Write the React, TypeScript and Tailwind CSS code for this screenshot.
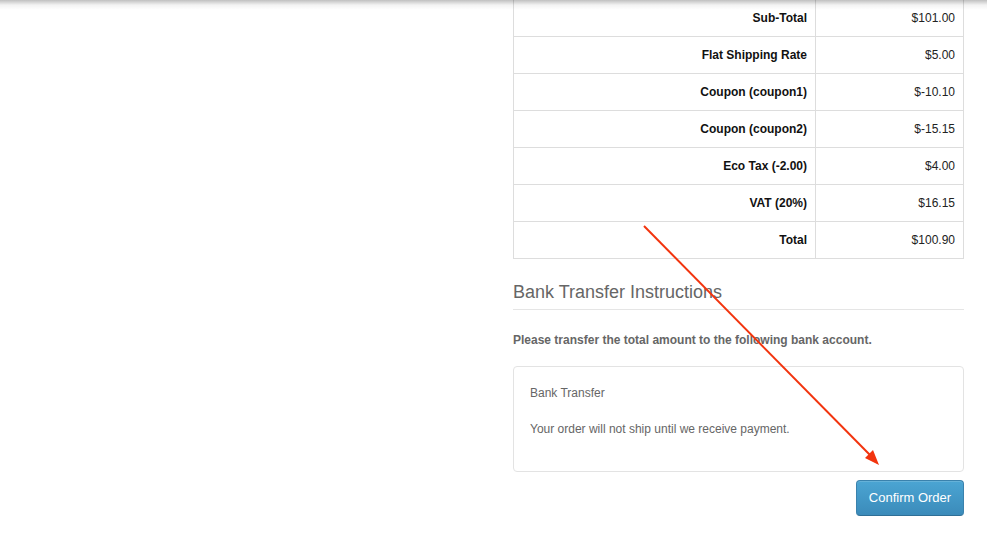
import React from 'react';

const totals = [
  { label: 'Sub-Total', value: '$101.00' },
  { label: 'Flat Shipping Rate', value: '$5.00' },
  { label: 'Coupon (coupon1)', value: '$-10.10' },
  { label: 'Coupon (coupon2)', value: '$-15.15' },
  { label: 'Eco Tax (-2.00)', value: '$4.00' },
  { label: 'VAT (20%)', value: '$16.15' },
  { label: 'Total', value: '$100.90' },
];

const App: React.FC = () => {
  return (
    <div
      className="relative min-h-[544px] w-full overflow-hidden bg-white text-[12px] text-[#666]"
      style={{ fontFamily: '"Liberation Sans", Arial, sans-serif' }}
    >
      {/* header shadow */}
      <div className="absolute inset-x-0 top-0 h-[10px] bg-gradient-to-b from-black/25 via-black/5 to-transparent" />

      <div className="ml-[513px] w-[451px] -mt-px">
        {/* Totals */}
        <table className="w-full border-collapse">
          <tbody>
            {totals.map((row) => (
              <tr key={row.label} className="h-[37px]">
                <td className="w-[302px] border border-[#dddddd] px-2 text-right font-bold text-[#111]">
                  {row.label}
                </td>
                <td className="border border-[#dddddd] px-2 text-right text-[#222]">{row.value}</td>
              </tr>
            ))}
          </tbody>
        </table>

        {/* Bank transfer */}
        <div className="mt-[19px] border-b border-[#e5e5e5] pt-[4px] pb-[7px] text-[18px] leading-[20px] text-[#666]">
          Bank Transfer Instructions
        </div>
        <p className="mt-[21px] font-bold leading-[18px] text-[#666]">
          Please transfer the total amount to the following bank account.
        </p>
        <div className="mt-[17px] rounded-[4px] border border-[#e3e3e3] bg-white pt-[17px] pb-[33px] pl-4 leading-[18px]">
          <p>Bank Transfer</p>
          <p className="mt-[18px]">Your order will not ship until we receive payment.</p>
        </div>

        <div className="mt-[8px] flex justify-end">
          <button className="h-[36px] w-[108px] rounded-[4px] border border-[#3a82ad] border-b-[#2f6f96] bg-gradient-to-b from-[#4ba5d3] to-[#3b8bba] text-[13px] text-white shadow-[inset_0_1px_0_rgba(255,255,255,0.15)]">
            Confirm Order
          </button>
        </div>
      </div>

      {/* annotation arrow */}
      <svg className="pointer-events-none absolute left-0 top-0" width="987" height="544">
        <line x1="644" y1="226" x2="871" y2="456" stroke="#f2340e" strokeWidth="2" />
        <polygon points="879,465 865,458 873,450" fill="#f2340e" />
      </svg>
    </div>
  );
};

export default App;
